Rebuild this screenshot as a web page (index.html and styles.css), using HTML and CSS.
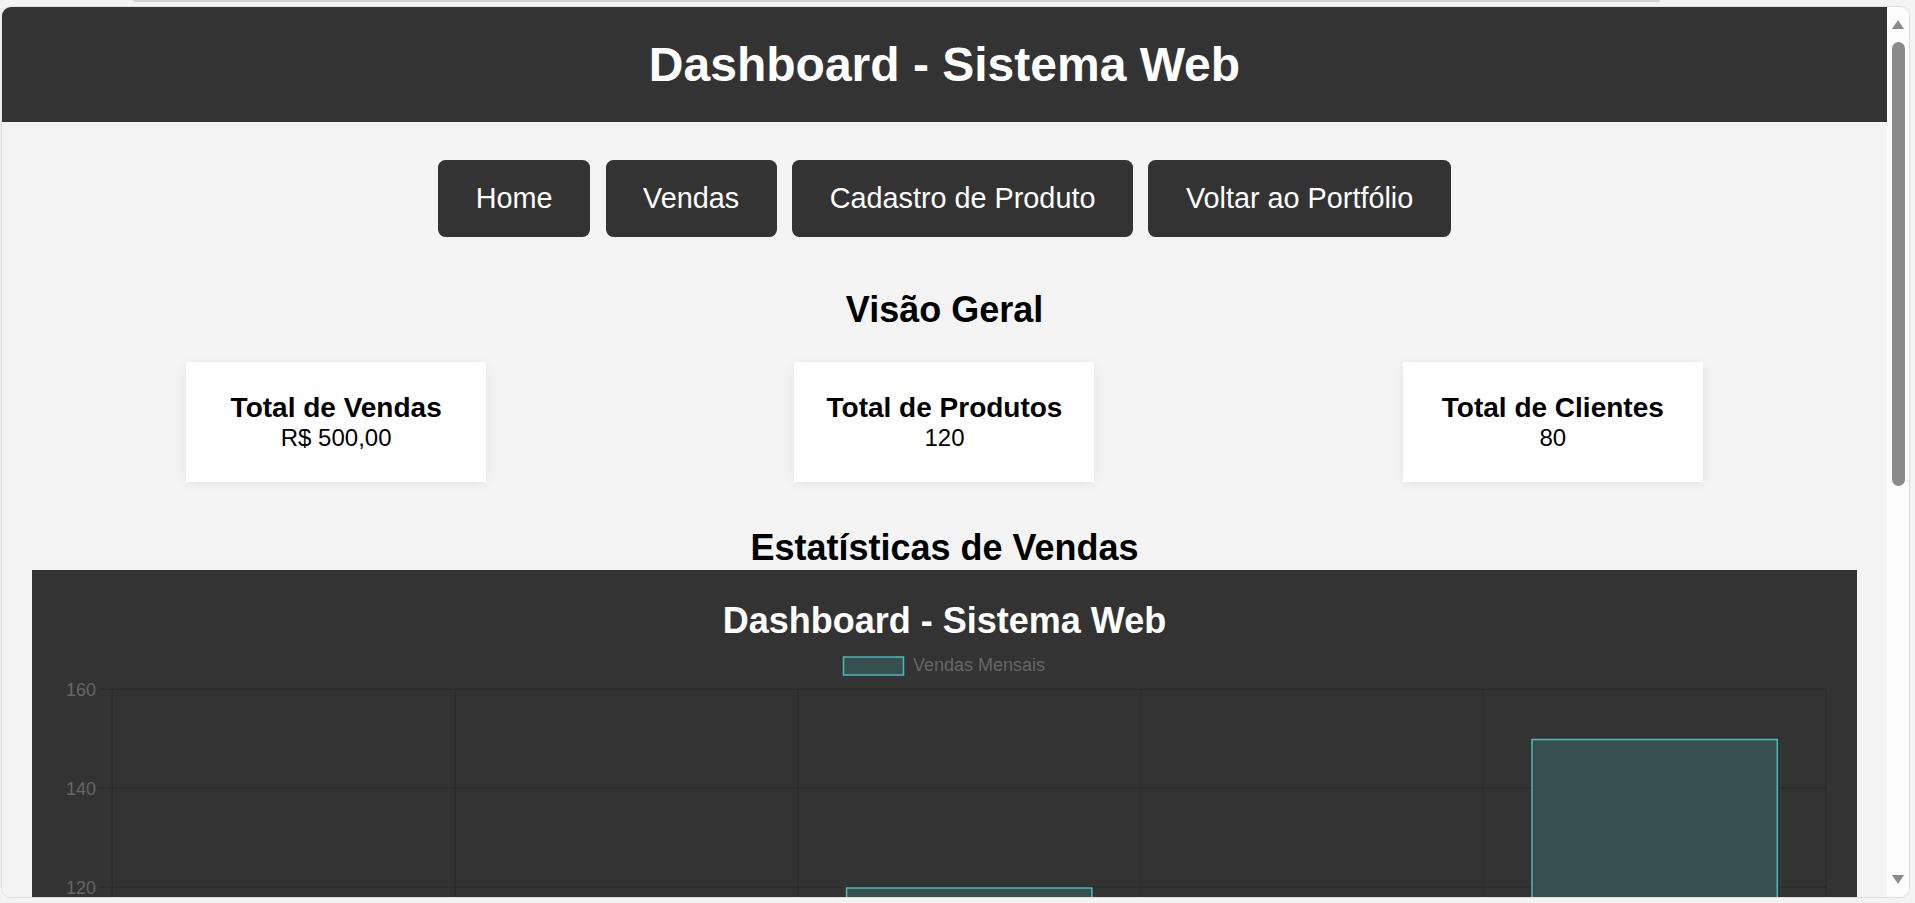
FILE: index.html
```html
<!DOCTYPE html>
<html lang="pt-BR">
<head>
<meta charset="utf-8">
<title>Dashboard - Sistema Web</title>
<link rel="stylesheet" href="styles.css">
</head>
<body>
<div class="topline"></div>
<div class="window">
  <div class="page">
    <header class="site-header">
      <h1>Dashboard - Sistema Web</h1>
    </header>
    <main class="main">
      <nav class="nav">
        <a class="nav-btn" href="#">Home</a>
        <a class="nav-btn" href="#">Vendas</a>
        <a class="nav-btn" href="#">Cadastro de Produto</a>
        <a class="nav-btn" href="#">Voltar ao Portfólio</a>
      </nav>
      <h2 class="section-title overview-title">Visão Geral</h2>
      <div class="cards">
        <div class="card"><h3>Total de Vendas</h3><p>R$ 500,00</p></div>
        <div class="card"><h3>Total de Produtos</h3><p>120</p></div>
        <div class="card"><h3>Total de Clientes</h3><p>80</p></div>
      </div>
      <h2 class="section-title stats-title">Estatísticas de Vendas</h2>
      <div class="chart-box">
        <svg class="chart" width="1825" height="1000" viewBox="0 0 1825 1000" xmlns="http://www.w3.org/2000/svg">
          <text x="912.5" y="62.7" text-anchor="middle" class="c-title">Dashboard - Sistema Web</text>
          <rect x="811.5" y="87" width="60" height="18" fill="#384f4f" stroke="#4bbaba" stroke-width="1.5"/>
          <text x="881" y="101.3" class="c-label">Vendas Mensais</text>
          <g stroke="rgba(0,0,0,0.13)" stroke-width="1.5">
            <line x1="68.4" y1="119.3" x2="1794" y2="119.3"/>
            <line x1="68.4" y1="218.3" x2="1794" y2="218.3"/>
            <line x1="68.4" y1="317.3" x2="1794" y2="317.3"/>
            <line x1="68.4" y1="416.3" x2="1794" y2="416.3"/>
            <line x1="68.4" y1="515.3" x2="1794" y2="515.3"/>
            <line x1="68.4" y1="614.3" x2="1794" y2="614.3"/>
            <line x1="68.4" y1="713.3" x2="1794" y2="713.3"/>
            <line x1="68.4" y1="812.3" x2="1794" y2="812.3"/>
            <line x1="68.4" y1="911.3" x2="1794" y2="911.3"/>
            <line x1="80.4" y1="119.3" x2="80.4" y2="923.3"/>
            <line x1="423.1" y1="119.3" x2="423.1" y2="923.3"/>
            <line x1="765.8" y1="119.3" x2="765.8" y2="923.3"/>
            <line x1="1108.6" y1="119.3" x2="1108.6" y2="923.3"/>
            <line x1="1451.3" y1="119.3" x2="1451.3" y2="923.3"/>
            <line x1="1794" y1="119.3" x2="1794" y2="923.3"/>
          </g>
          <g class="c-label" text-anchor="end">
            <text x="64" y="125.7">160</text>
            <text x="64" y="224.7">140</text>
            <text x="64" y="323.7">120</text>
          </g>
          <g fill="#384f4f" stroke="#4bbaba" stroke-width="1.5">
            <rect x="129.5" y="416.3" width="245.3" height="495"/>
            <rect x="472.2" y="515.3" width="245.3" height="396"/>
            <rect x="814.6" y="318" width="245.3" height="593.3"/>
            <rect x="1157.3" y="366.8" width="245.3" height="544.5"/>
            <rect x="1500" y="169.5" width="245.3" height="741.8"/>
          </g>
        </svg>
      </div>
    </main>
  </div>
  <div class="scrollbar">
    <div class="arrow-up"></div>
    <div class="thumb"></div>
    <div class="spacer"></div>
    <div class="arrow-down"></div>
  </div>
</div>
</body>
</html>
```

FILE: styles.css
```css
html, body {
  margin: 0;
  padding: 0;
}

body {
  background: #f3f3f3;
  font-family: "Liberation Sans", Arial, sans-serif;
  font-size: 24px;
  color: #000;
  height: 903px;
  overflow: hidden;
}

.topline {
  height: 2px;
  margin-left: 133px;
  width: 1527px;
  background: #d2d2d2;
  border-radius: 0 0 3px 3px;
}

.window {
  margin-top: 4px;
  margin-left: 1px;
  width: 1909px;
  height: 892px;
  box-sizing: border-box;
  border: 1px solid #dedede;
  border-radius: 10px;
  overflow: hidden;
  display: flex;
  background: #f4f4f4;
}

.page {
  flex: 1;
  min-width: 0;
  overflow: hidden;
  background: #f4f4f4;
}

.site-header {
  background: #333;
  color: #fff;
  padding: 30px 0;
  text-align: center;
}

.site-header h1 {
  margin: 0;
  font-size: 48px;
  font-weight: bold;
}

.main {
  padding: 30px;
}

.nav {
  display: flex;
  justify-content: center;
  gap: 15.5px;
  margin-top: 8px;
}

.nav-btn {
  display: block;
  background: #333;
  color: #fff;
  text-decoration: none;
  font-size: 28.8px;
  padding: 22px 37.5px;
  border-radius: 7.5px;
}

.section-title {
  font-size: 36px;
  font-weight: bold;
  text-align: center;
}

.overview-title {
  margin: 52px 0 31px;
}

.stats-title {
  margin: 45px 0 1px;
}

.cards {
  display: flex;
  justify-content: space-around;
}

.card {
  width: 300px;
  box-sizing: border-box;
  padding: 30px;
  background: #fff;
  text-align: center;
  box-shadow: 0 2px 12px rgba(0, 0, 0, 0.07);
}

.card h3 {
  margin: 0;
  font-size: 28px;
}

.card p {
  margin: 0;
  font-size: 24px;
}

.chart-box {
  background: #333;
  height: 1000px;
}

.chart {
  display: block;
}

.c-title {
  font-family: "Liberation Sans", Arial, sans-serif;
  font-size: 36px;
  font-weight: bold;
  fill: #fff;
}

.c-label {
  font-family: "Liberation Sans", Arial, sans-serif;
  font-size: 18px;
  fill: #666;
}

.scrollbar {
  width: 22px;
  flex: none;
  background: #fdfdfd;
  display: flex;
  flex-direction: column;
  align-items: center;
  padding: 13px 0;
  box-sizing: border-box;
}

.arrow-up {
  width: 0;
  height: 0;
  border-left: 6.5px solid transparent;
  border-right: 6.5px solid transparent;
  border-bottom: 9px solid #8a8a8a;
}

.arrow-down {
  width: 0;
  height: 0;
  border-left: 6.5px solid transparent;
  border-right: 6.5px solid transparent;
  border-top: 9px solid #8a8a8a;
}

.thumb {
  margin-top: 13px;
  width: 13px;
  height: 444px;
  border-radius: 6.5px;
  background: #8a8a8a;
}

.spacer {
  flex: 1;
}
```
